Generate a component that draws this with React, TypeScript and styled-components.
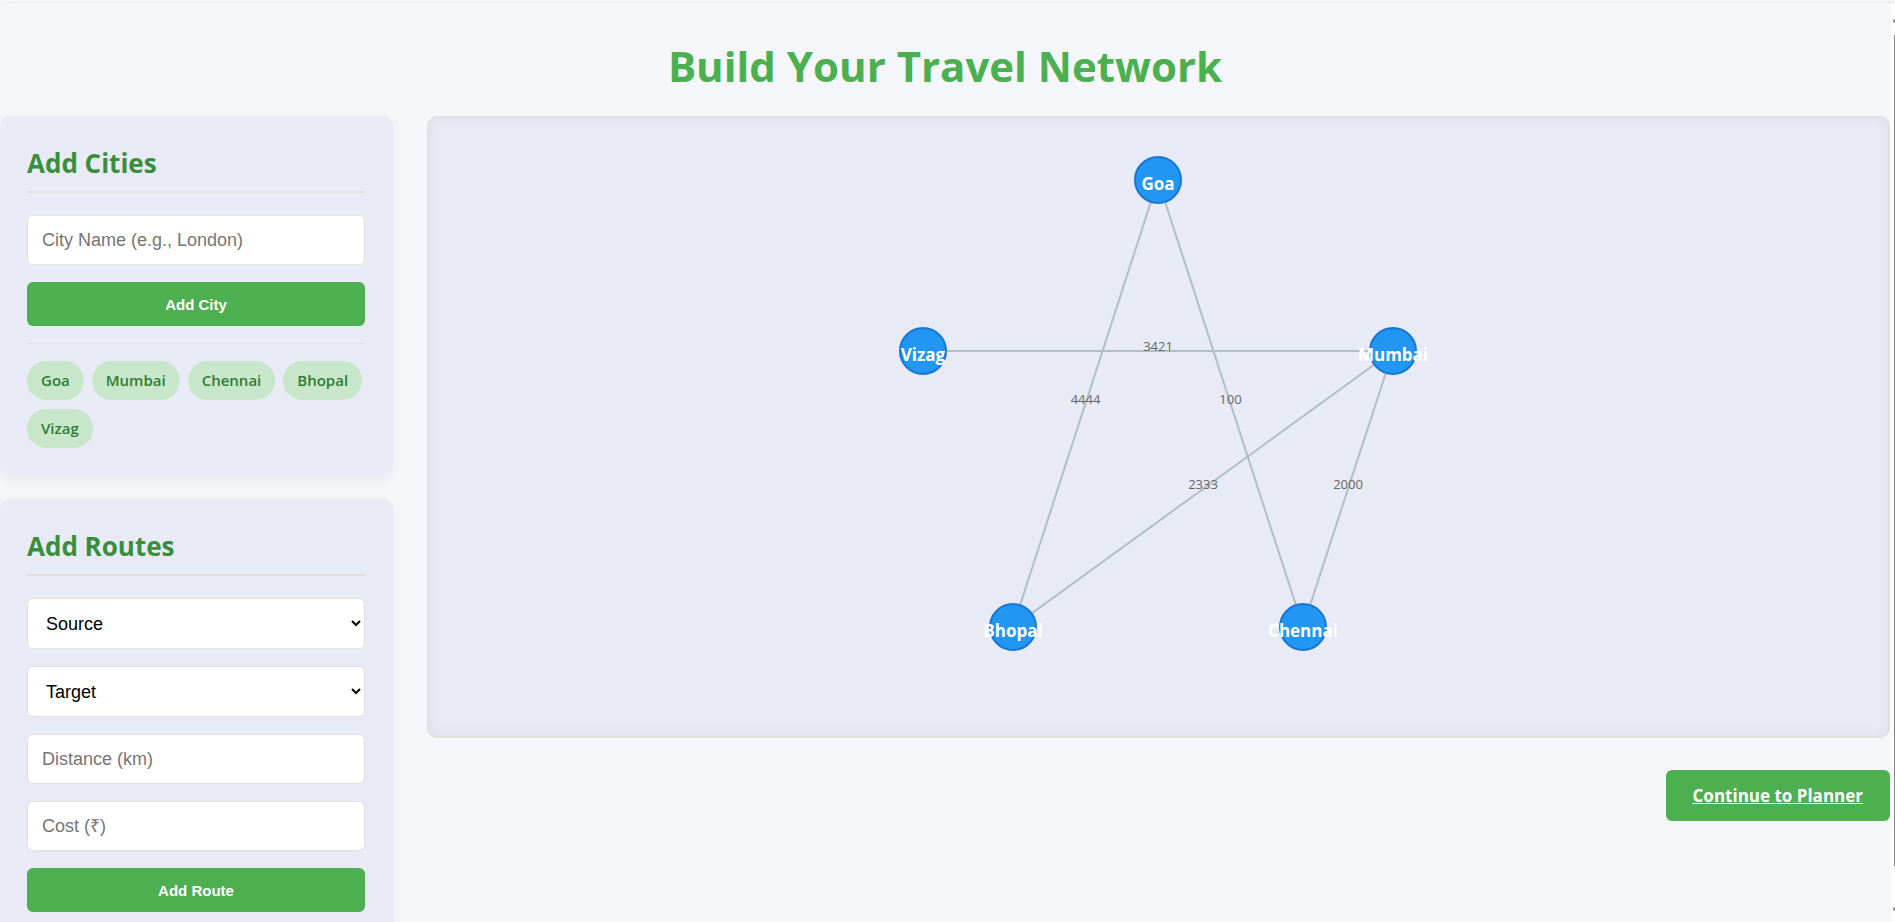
import React, { useState } from "react";
import styled, { createGlobalStyle } from "styled-components";

const GlobalStyle = createGlobalStyle`
  *, *::before, *::after { box-sizing: border-box; }
  body {
    margin: 0;
    background: #f5f5f5;
    font-family: "Segoe UI", "Open Sans", "Noto Sans", sans-serif;
  }
`;

const Shell = styled.div`
  display: flex;
  height: 100vh;
  padding-top: 2px;
  overflow: hidden;
`;

const Page = styled.main`
  flex: 1;
  min-width: 0;
  overflow-y: auto;
  scrollbar-width: none;
  border-top: 1px solid #e9e9e9;
  border-top-left-radius: 10px;
  background: #f4f6fa;
`;

const Rail = styled.div`
  display: flex;
  flex-direction: column;
  align-items: flex-end;
  width: 5px;
  padding: 16px 0 11px;
  border-top: 1px solid #e9e9e9;
  background: #fcfcfc;
`;

const Thumb = styled.div`
  flex: 1;
  width: 1px;
  margin: 12px 0 41px;
  background: #858585;
`;

const RailArrow = styled.div`
  width: 2px;
  height: 4px;
  border-radius: 2px 0 0 2px;
  background: #8f8f8f;
`;

const PageTitle = styled.h1`
  margin: 0;
  padding: 32px 0 20px;
  color: #4caf50;
  font-size: 42px;
  line-height: 61px;
  text-align: center;
`;

const Columns = styled.div`
  display: flex;
  align-items: flex-start;
  gap: 34px;
`;

const Sidebar = styled.aside`
  display: flex;
  flex: none;
  flex-direction: column;
  gap: 23px;
  width: 393px;
`;

const Panel = styled.section`
  padding: 28px 28px 28px 27px;
  border-radius: 10px;
  background: #e8eaf6;
  box-shadow: 0 4px 12px rgba(0, 0, 0, 0.05);
`;

const PanelTitle = styled.h2`
  margin: 0 0 22px;
  padding-bottom: 9px;
  border-bottom: 2px solid #e0e0e0;
  color: #388e3c;
  font-size: 26px;
  line-height: 38px;
`;

const Form = styled.form`
  display: flex;
  flex-direction: column;
  gap: 17px;
`;

const TextField = styled.input`
  width: 100%;
  height: 50px;
  padding: 0 14px;
  border: 1px solid #e0e0e0;
  border-radius: 6px;
  background: #fff;
  font-family: "Liberation Sans", Arial, sans-serif;
  font-size: 18px;

  &::placeholder { color: #757575; }
`;

const SelectField = styled.select`
  width: 100%;
  height: 51px;
  padding: 0 0 0 14px;
  border: 1px solid #e0e0e0;
  border-radius: 6px;
  background: #fff;
  color: #000;
  font-family: "Liberation Sans", Arial, sans-serif;
  font-size: 18px;
`;

const SubmitButton = styled.button`
  height: 44px;
  border: 0;
  border-radius: 6px;
  background: #4caf50;
  color: #fff;
  font-family: "Liberation Sans", Arial, sans-serif;
  font-size: 15px;
  font-weight: 700;
  cursor: pointer;
`;

const ChipList = styled.ul`
  display: flex;
  flex-wrap: wrap;
  gap: 9px 8px;
  margin: 17px 0 0;
  padding: 17px 0 0;
  border-top: 1px solid #e0e0e0;
  list-style: none;
`;

const Chip = styled.li`
  padding: 8px 14px;
  border-radius: 20px;
  background: #c8e6c9;
  color: #2e7d32;
  font-size: 15px;
  font-weight: 600;
  line-height: 23px;
`;

const Workspace = styled.div`
  display: flex;
  flex: 1;
  flex-direction: column;
  gap: 32px;
  min-width: 0;
`;

const Canvas = styled.div`
  border: 2px solid #e0e0e0;
  border-radius: 10px;
  background: #e8eaf6;
  box-shadow: inset 0 0 15px rgba(0, 0, 0, 0.05);
`;

const Network = styled.svg`
  display: block;
  width: 100%;
  height: 618px;
`;

const Edge = styled.line`
  stroke: #b0bec5;
  stroke-width: 2px;
`;

const NodeDot = styled.circle`
  fill: #2196f3;
  stroke: #1976d2;
  stroke-width: 2px;
`;

const NodeLabel = styled.text`
  fill: #fff;
  font-size: 17px;
  font-weight: 700;
  text-anchor: middle;
`;

const EdgeLabel = styled.text`
  fill: #666;
  font-size: 13px;
  text-anchor: middle;
`;

const ContinueLink = styled.a`
  align-self: flex-end;
  padding: 13px 27px;
  border-radius: 6px;
  background: #4caf50;
  color: #fff;
  font-size: 17px;
  font-weight: 700;
  line-height: 25px;
  text-decoration: underline;
`;

type City = { name: string; x: number; y: number };
type Route = { from: number; to: number; distance: number };

const cities: City[] = [
  { name: "Goa", x: 729, y: 62 },
  { name: "Mumbai", x: 964, y: 233 },
  { name: "Chennai", x: 874, y: 509 },
  { name: "Bhopal", x: 584, y: 509 },
  { name: "Vizag", x: 494, y: 233 },
];

const routes: Route[] = [
  { from: 0, to: 2, distance: 100 },
  { from: 0, to: 3, distance: 4444 },
  { from: 1, to: 2, distance: 2000 },
  { from: 1, to: 3, distance: 2333 },
  { from: 1, to: 4, distance: 3421 },
];

function CitySelect({ label }: { label: string }) {
  const [value, setValue] = useState("");
  return (
    <SelectField aria-label={label} value={value} onChange={(e) => setValue(e.target.value)}>
      <option value="">{label}</option>
      {cities.map((c) => (
        <option key={c.name}>{c.name}</option>
      ))}
    </SelectField>
  );
}

export default function App() {
  const stop = (e: React.FormEvent) => e.preventDefault();
  return (
    <>
      <GlobalStyle />
      <Shell>
        <Page>
          <PageTitle>Build Your Travel Network</PageTitle>
          <Columns>
            <Sidebar>
              <Panel>
                <PanelTitle>Add Cities</PanelTitle>
                <Form onSubmit={stop}>
                  <TextField aria-label="City Name" placeholder="City Name (e.g., London)" />
                  <SubmitButton type="submit">Add City</SubmitButton>
                </Form>
                <ChipList>
                  {cities.map((c) => (
                    <Chip key={c.name}>{c.name}</Chip>
                  ))}
                </ChipList>
              </Panel>
              <Panel>
                <PanelTitle>Add Routes</PanelTitle>
                <Form onSubmit={stop}>
                  <CitySelect label="Source" />
                  <CitySelect label="Target" />
                  <TextField aria-label="Distance" placeholder="Distance (km)" />
                  <TextField aria-label="Cost" placeholder="Cost (₹)" />
                  <SubmitButton type="submit">Add Route</SubmitButton>
                </Form>
              </Panel>
            </Sidebar>
            <Workspace>
              <Canvas>
                <Network viewBox="0 0 1459 618">
                  {routes.map((r) => {
                    const a = cities[r.from];
                    const b = cities[r.to];
                    return (
                      <g key={`${r.from}-${r.to}`}>
                        <Edge x1={a.x} y1={a.y} x2={b.x} y2={b.y} />
                        <EdgeLabel x={(a.x + b.x) / 2} y={(a.y + b.y) / 2}>
                          {r.distance}
                        </EdgeLabel>
                      </g>
                    );
                  })}
                  {cities.map((c) => (
                    <g key={c.name}>
                      <NodeDot cx={c.x} cy={c.y} r={23} />
                      <NodeLabel x={c.x} y={c.y + 10}>
                        {c.name}
                      </NodeLabel>
                    </g>
                  ))}
                </Network>
              </Canvas>
              <ContinueLink href="#planner">Continue to Planner</ContinueLink>
            </Workspace>
          </Columns>
        </Page>
        <Rail aria-hidden="true">
          <RailArrow />
          <Thumb />
          <RailArrow />
        </Rail>
      </Shell>
    </>
  );
}
